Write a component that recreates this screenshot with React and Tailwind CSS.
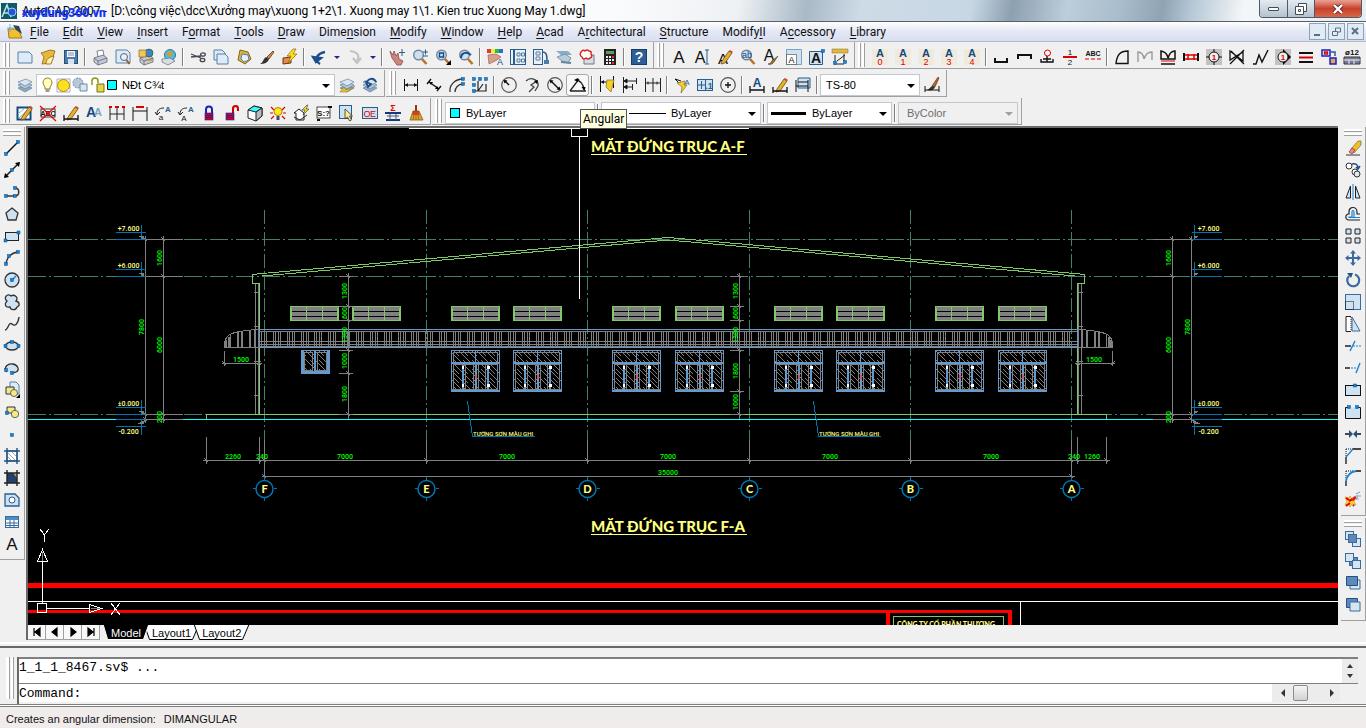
import clsx from "clsx";
import React, { useState } from "react";

const BLUE = "#2b5d8c";
const PALE = "#cfe2f1";

/* ---------- small drawing parts shared by the icons ---------- */

const Letter = ({ x = 8, y = 14, size = 16, fill = "#111", bold, children }) => (
  <text
    x={x}
    y={y}
    fontSize={size}
    fill={fill}
    textAnchor="middle"
    fontWeight={bold ? 700 : 400}
    fontFamily="Liberation Sans, sans-serif"
    stroke="none"
  >
    {children}
  </text>
);

const Sheet = ({ x = 1, y = 3, w = 14, h = 11 }) => (
  <path
    d={`M${x} ${y}h${w - 3}l3 3v${h - 3}h${-w}z`}
    fill="#dcebf6"
    stroke="#5580a8"
  />
);

const Lens = ({ children }) => (
  <g>
    <circle cx="6.5" cy="6" r="4.8" fill="#cfe0ee" stroke="#6f87a3" strokeWidth="1.4" />
    <path d="M10 10l4.5 5" stroke="#b9722d" strokeWidth="2.6" />
    {children}
  </g>
);

const Printer = () => (
  <g stroke="#667" strokeWidth="0.8">
    <path d="M5 2l6-1 1 6-6 1z" fill="#fff" />
    <path d="M2 9l9-3 4 3v4l-9 3-4-3z" fill="#c3c9d8" />
    <path d="M2 9l4 3 9-3M6 12v4" fill="none" />
  </g>
);

const Layers = () => (
  <g stroke="#5f7f9f" strokeWidth="0.7">
    <path d="M1 11l8-3 6 3-7 4z" fill="#8fa9c2" />
    <path d="M1 8l8-3 6 3-7 4z" fill="#b3c8da" />
    <path d="M1 5l8-3 6 3-7 4z" fill="#dae6f0" />
  </g>
);

const Pencil = () => (
  <g>
    <path d="M5 12l7-10 3 2-7 10-4 1z" fill="#e0b030" stroke="#7a4a10" strokeWidth="0.8" />
    <path d="M12 2l1-1 3 2-1 1z" fill="#d33" />
  </g>
);

const Broom = () => (
  <g>
    <path d="M8 0v6" stroke="#8a3b12" strokeWidth="2" />
    <path d="M5 6h6l4 9H2z" fill="#dda52a" stroke="#8a5a10" strokeWidth="0.8" />
    <path d="M5 7h6M4.500 9h7" stroke="#c22" strokeWidth="1.4" />
    <path d="M6 10l-1 5M8 10v5M10 10l1 5" stroke="#8a5a10" strokeWidth="0.7" />
  </g>
);

const Bolt = ({ fill = "#ffdf20" }) => (
  <path d="M11 0L5 7h4l-3 7 9-9h-4l3-5z" fill={fill} stroke="#8a6a00" strokeWidth="0.7" />
);

const Nodes = ({ at }) =>
  at.map(([x, y]) => (
    <rect key={`${x}-${y}`} x={x - 1.5} y={y - 1.5} width="3" height="3" fill="#1583d8" stroke="#0a4f8a" strokeWidth="0.5" />
  ));

const Lock = ({ open }) => (
  <g>
    <path
      d={open ? "M9 8V3.500a2.500 2.500 0 0 1 5 0V6" : "M5 8V4.500a3 3 0 0 1 6 0V8"}
      fill="none"
      stroke={open ? "#c00" : "#1722b8"}
      strokeWidth="2"
    />
    <rect x={open ? 2 : 4} y="8" width="8" height="7" fill="#d00" stroke="#1722b8" strokeWidth="0.6" />
    <path d={open ? "M2 10.500h8M2 12.500h8" : "M4 10.500h8M4 12.500h8"} stroke="#1722b8" />
  </g>
);

const LetterOver = ({ n }) => (
  <g>
    <rect width="16" height="16" fill="#f0eadc" />
    <Letter y={8} size={11} fill="#124a80" bold>A</Letter>
    <Letter y={16} size={9} fill="#d00">{n}</Letter>
  </g>
);

const DimBar = ({ y = 8 }) => (
  <g stroke="#111" fill="#111">
    <path d={`M1.500 ${y - 6}v12M14.500 ${y - 6}v12M2 ${y}h12`} fill="none" />
    <path d={`M2 ${y}l3-2v4zM14 ${y}l-3-2v4z`} stroke="none" />
  </g>
);

const Cube = ({ front, x, y }) => (
  <rect x={x} y={y} width="8" height="8" fill={front ? "#5d8abb" : "#d6e5f2"} stroke="#3b6a9c" />
);

const ICONS = {
  new: <Sheet />,
  open: (
    <g stroke="#8a6510" strokeWidth="0.8">
      <path d="M1 4l9-3 5 1-4 12-9 1 2-7z" fill="#e8b83d" />
      <path d="M6 15c0-5 3-7 8-8l-3 8z" fill="#fff0b5" />
    </g>
  ),
  save: (
    <g>
      <rect x="1.500" y="1.500" width="13" height="13" fill="#4b7aab" stroke="#24507c" />
      <path d="M4 2h8v6H4z" fill="#f5f8fb" />
      <path d="M5 4h6M5 6h6" stroke="#88a" />
      <path d="M5 10h6v5H5z" fill="#d8e2ec" />
    </g>
  ),
  print: <Printer />,
  preview: (
    <g>
      <Sheet y={1} h={13} />
      <circle cx="9" cy="8" r="3.500" fill="#e5f0f8" stroke="#567" />
      <path d="M11.500 11l3 4" stroke="#a05a20" strokeWidth="2" />
    </g>
  ),
  publish: (
    <g>
      <Printer />
      <circle cx="11" cy="4" r="4" fill="#3f86b8" stroke="#245" strokeWidth="0.6" />
      <path d="M1 1h7v7H1z" fill="#efc94c" stroke="#864" strokeWidth="0.7" />
      <path d="M8 11h6" stroke="#c90" strokeWidth="1.500" />
    </g>
  ),
  web: (
    <g>
      <circle cx="9" cy="6" r="5.500" fill="#58b9d6" stroke="#2679a0" />
      <path d="M6 3l4-1 2 3-3 3-3-2z" fill="#c9a13a" />
      <path d="M1 10l8-1 5 3-7 4-6-3z" fill="#d7dde8" stroke="#778" strokeWidth="0.8" />
    </g>
  ),
  cut: (
    <g fill="none" stroke="#445" strokeWidth="1.300">
      <path d="M1 5l10 4M1 8l10-1" />
      <ellipse cx="13" cy="5.500" rx="2.300" ry="1.700" />
      <ellipse cx="12.500" cy="11" rx="2.300" ry="1.700" />
    </g>
  ),
  copy: (
    <g>
      <Sheet x={1} y={1} w={11} h={10} />
      <Sheet x={4} y={5} w={11} h={10} />
    </g>
  ),
  paste: (
    <g>
      <path d="M4 1l8 2 3 7-6 5-7-4z" fill="#d9b24a" stroke="#8a6510" />
      <path d="M6 5l6 1 1 5-5 2-3-3z" fill="#e6f0f8" stroke="#5580a8" />
    </g>
  ),
  brush: (
    <g>
      <path d="M8 8l6-6 1 1-5 7z" fill="#c98a4a" stroke="#6b3b10" strokeWidth="0.8" />
      <path d="M1 15c3-1 3-5 6-7l3 2c-1 4-5 5-9 5z" fill="#333" />
    </g>
  ),
  blockEdit: (
    <g>
      <path d="M1 9l8-1v6l-8 1z" fill="#e58a4a" stroke="#703010" />
      <Bolt />
    </g>
  ),
  undo: <path d="M9 15C4 12 4 5 14 3M2 8l3 5 5-4z" fill="none" stroke="#1f4f8a" strokeWidth="2.400" />,
  redo: <path d="M3 2c8 1 10 5 7 10M6 9l4 5 4-5" fill="none" stroke="#c3c3c3" strokeWidth="2.200" />,
  pan: (
    <g>
      <path d="M1 2l3 4 1-4 2 5 2-3 1 6 4 2-2 4H8L3 9z" fill="#c9857f" stroke="#8b4f4a" strokeWidth="0.8" />
      <path d="M13 0v7M10 3.500h6" stroke={BLUE} />
    </g>
  ),
  zoomRt: <Lens><path d="M11 3h5M13.500 0.500v5M11 7h5" stroke={BLUE} /></Lens>,
  zoomWin: <Lens><path d="M4.500 4h4v4h-4z" fill="none" stroke="#124a80" strokeWidth="1.400" /><path d="M16 16v-5l-5 5z" /></Lens>,
  zoomPrev: <Lens><path d="M3 9c0-5 5-7 10-3" fill="none" stroke="#1f4f8a" strokeWidth="2" /></Lens>,
  props: (
    <g>
      <path d="M0 0h4v4H0z" fill="#e33" /><path d="M4 0h4v4H4z" fill="#ee3" /><path d="M8 0h4v4H8z" fill="#3b3" /><path d="M12 0h4v4h-4z" fill="#36d" />
      <path d="M1 6l8-1 5 3-4 3-8 4z" fill="#d8a08c" stroke="#8b4f4a" strokeWidth="0.6" />
      <Letter x={13} y={16} size={9} fill="#124a80">A</Letter>
    </g>
  ),
  center: (
    <g>
      <rect x="0.500" y="0.500" width="15" height="15" fill="#eaf2f9" stroke={BLUE} />
      <path d="M4 1v14" stroke={BLUE} strokeWidth="2" />
      <path d="M7 4h3v3H7zM11.500 4h3v3h-3zM7 10h3v3H7zM11.500 10h3v3h-3z" fill="none" stroke="#567ba0" />
    </g>
  ),
  palettes: (
    <g>
      <rect x="0.500" y="0.500" width="9" height="15" fill="#eaf2f9" stroke={BLUE} />
      <path d="M3 3h4v3H3zM3 8h4v3H3z" fill="none" stroke="#567ba0" />
      <path d="M9 3c4 0 5 2 5 8" fill="none" stroke={BLUE} strokeWidth="1.500" />
      <path d="M11 11h5v4h-5z" fill="#4b7aab" />
    </g>
  ),
  sheetset: (
    <g>
      <path d="M0 2h12l4 4H5z" fill="#86aec9" />
      <path d="M1 8l8-3 6 4-3 5-6-2z" fill="#b8ccd9" stroke="#68859a" strokeWidth="0.8" />
      <path d="M5 13l10 1" stroke="#68859a" strokeWidth="2" />
    </g>
  ),
  markup: (
    <g>
      <path d="M5 6h10v9H5z" fill="#d8dde4" stroke="#778" />
      <path d="M2 3q2-3 4-1q2-2 4 0q3 0 2 3q2 3-1 4q-2 2-4 0q-3 2-4-1q-3-2-1-5z" fill="#fff" stroke="#d22" strokeWidth="1.400" />
    </g>
  ),
  calc: (
    <g>
      <rect x="2" y="0" width="12" height="16" fill="#222" />
      <path d="M4 2h8v3H4z" fill="#5d9a5d" />
      <path d="M4 7h2v2H4zM7 7h2v2H7zM4 10h2v2H4zM7 10h2v2H7zM4 13h2v2H4zM7 13h2v2H7zM10 10h2v2h-2z" fill="#eee" />
      <path d="M10 7h2v2h-2zM10 13h2v2h-2z" fill="#d33" />
    </g>
  ),
  help: (
    <g>
      <rect x="0.500" y="0.500" width="15" height="15" fill="#2b5f96" stroke="#173d66" />
      <Letter size={14} y={13} fill="#fff" bold>?</Letter>
    </g>
  ),
  mtext: <Letter size={17}>A</Letter>,
  dtext: <g><Letter x={6} size={16}>A</Letter><path d="M11 1h4M13 1v14M11 15h4" stroke={BLUE} /></g>,
  editText: <g><Letter x={6} y={15} size={15}>A</Letter><Pencil /></g>,
  findText: <Lens><Letter x={7} y={9} size={9} fill="#124a80">ab</Letter></Lens>,
  textStyle: <g><Letter x={6} y={12}>A</Letter><path d="M5 15c3 0 3-3 5-4l5-4-4 6c-1 2-4 3-6 2z" fill="#a86a30" stroke="#442" strokeWidth="0.6" /></g>,
  textScale: <g><path d="M0.500 0.500h15v15h-15z" fill={PALE} stroke="#7f9fbf" /><path d="M0.500 5.500h10v10h-10z" fill="#fff" stroke="#222" strokeDasharray="1 1" /><Letter x={5.500} y={14} size={9}>A</Letter></g>,
  textJust: <g><path d="M0.500 2.500h13v13h-13z" fill={PALE} stroke={BLUE} /><Letter x={7} y={14} size={14} bold>A</Letter><Nodes at={[[14, 2]]} /></g>,
  textSpace: <g><path d="M0 0h16v4H0z" fill="#e3b93a" stroke="#864" strokeWidth="0.500" /><path d="M3 6v9h9M12 5v7M5 12l8-6" stroke="#222" fill="none" /><Nodes at={[[3, 14], [13, 13]]} /></g>,
  a0: <LetterOver n="0" />,
  a1: <LetterOver n="1" />,
  a2: <LetterOver n="2" />,
  a3: <LetterOver n="3" />,
  a4: <LetterOver n="4" />,
  barUp: <path d="M2 9v4h12V9" fill="none" stroke="#111" strokeWidth="2" />,
  barDown: <path d="M2 10V6h13v4" fill="none" stroke="#111" strokeWidth="2" />,
  barPin: <g><path d="M2 10v3h12v-3M8 13V7M4 10h8" fill="none" stroke="#111" strokeWidth="1.400" /><circle cx="8.500" cy="4" r="3" fill="#fff" stroke="#d00" /></g>,
  half: <g><Letter y={6} size={8}>1</Letter><path d="M1 8h14" stroke="#d00" strokeWidth="2" /><Letter y={16} size={8}>2</Letter></g>,
  abcDots: <g><Letter y={7} size={7} bold>ABC</Letter><path d="M0 10h16" stroke="#d00" strokeDasharray="4 2" /></g>,
  arcA: <path d="M2 14.500h12V2C6 2 3 6 2 14.500z" fill="none" stroke="#111" strokeWidth="1.400" />,
  mGray: <path d="M1 13V3q5 0 6 7q2-7 8-7v8" fill="none" stroke="#999" strokeWidth="1.400" />,
  mBlack: <g><path d="M1 10V2q6 1 7 7q2-7 7-7v8z" fill="none" stroke="#111" strokeWidth="1.500" /><path d="M1 12h14" stroke="#d00" /><path d="M1 15h14" stroke="#111" strokeWidth="1.500" /></g>,
  ibeam: <g><path d="M1 4v8M15 4v8" stroke="#111" strokeWidth="2" /><path d="M2 6h12M2 10h12M5 5v6M11 5v6" stroke="#d00" strokeWidth="1.500" /></g>,
  node1: <g><path d="M0 0h16v16H0z" fill="#c4c2c0" /><path d="M8 0v16M0 8h16" stroke="#111" /><circle cx="8" cy="8" r="5" fill="#eee" stroke="#111" /><Letter y={11} size={8} fill="#d00" bold>1</Letter></g>,
  scissor: <path d="M1 2v9L14 3v9zM1 15L15 1M2 2l13 13" fill="none" stroke="#111" strokeWidth="1.300" />,
  zig: <path d="M1 15h3l3-9 3 7 6-12" fill="none" stroke="#111" strokeWidth="1.400" />,
  node2: <g><path d="M0 0h16v16H0z" fill="#c4c2c0" /><path d="M8 0l8 8-8 8z" /><circle cx="8" cy="8" r="5" fill="#eee" stroke="#111" /><Letter y={11} size={8} fill="#d00" bold>1</Letter></g>,
  bars3: <g strokeWidth="2"><path d="M1 4h14M1 13h14" stroke="#111" /><path d="M1 8.500h14" stroke="#d00" /></g>,
  boxes: <g fill="#ffd" strokeWidth="1.500"><path d="M1 1h8v6H1z" stroke="#12c" /><path d="M3.500 3h3v2h-3z" stroke="#d00" /><path d="M9 9h6v6H9z" fill="#f3a24c" stroke="#12c" /><path d="M10 3h4v4" fill="none" stroke={BLUE} /></g>,
  phi: <g><Letter y={6} size={8} bold>ø12</Letter><path d="M0 8h16v7H0z" fill="#7a7f9e" stroke="#333" /><path d="M0 11h16M5 11v4M10 11v4" stroke="#eee" /></g>,
  layers: <Layers />,
  layerCur: <g><Layers /><path d="M1 15l4-5 2 3 9-4-8 6z" fill="#e8c02a" stroke="#864" strokeWidth="0.500" /></g>,
  layerPrev: <g><Layers /><path d="M5 7c0-6 7-7 9-2M4 5l2 5 3-3z" fill="none" stroke="#1f4f8a" strokeWidth="1.800" /></g>,
  dimLin: <DimBar />,
  dimAlign: <g><path d="M3 5l10 7M1 7l4-5M11 14l4-5" stroke="#111" strokeWidth="1.400" /><path d="M3 5l4 0-2 3zM13 12l-4 0 2-3z" /></g>,
  dimArc: <g><path d="M1 15C0 8 6 2 14 2M6 15c0-4 3-8 8-8" fill="none" stroke="#333" strokeWidth="1.300" /><Nodes at={[[14, 2], [14, 7]]} /></g>,
  dimOrd: <g><path d="M6 4v10h8V7M6 14l5-7M3 14h3" fill="none" stroke="#222" strokeWidth="1.200" /><Nodes at={[[2, 2], [8, 2], [14, 2], [2, 8], [2, 14]]} /></g>,
  dimRad: <g><circle cx="8" cy="8" r="7.300" fill="none" stroke="#555" strokeWidth="1.200" /><path d="M8 8L4 4" stroke="#111" strokeWidth="1.500" /><path d="M2.500 3l4 .5-3 3z" /></g>,
  dimJog: <g><path d="M2 4c5-5 13-1 12 5l-3 5M13 4L7 8l3 2-5 5" fill="none" stroke="#444" strokeWidth="1.300" /><path d="M14 3l-1 4-3-3z" /></g>,
  dimDia: <g><circle cx="8" cy="8" r="7.300" fill="none" stroke="#555" strokeWidth="1.200" /><path d="M4 4l8 8" stroke="#111" strokeWidth="1.500" /><path d="M2.500 3l4 .5-3 3zM13.500 13l-4-.5 3-3z" /></g>,
  dimAng: <g><path d="M0 14L9 2M0 14h16M6 3q7 1 8 10" fill="none" stroke="#222" strokeWidth="1.300" /><path d="M14.500 14l-3-4h4zM4 3l4-2v4z" /></g>,
  dimQuick: <g><DimBar y={5} /><path d="M8 3l7 0-3 12-5-5z" fill="#f4d21c" stroke="#864" strokeWidth="0.700" /><path d="M1.500 10v5" stroke="#111" /></g>,
  dimBase: <g stroke="#222"><path d="M1.500 0v16M2 4h12M14.500 1v6M2 10h8M10.500 7v6" fill="none" /><path d="M2 4l3-2v4zM2 10l3-2v4z" /></g>,
  dimCont: <g stroke="#222" fill="none"><path d="M0.500 1v14M8 1v14M15.500 1v14M1 6h14" /><path d="M3 4.500v3M12 4.500v3" /></g>,
  leader: <g><path d="M1 2l6 2M1 2l4 4" stroke="#111" /><path d="M3 6l8-2-1 4 3 0-6 8 1-6z" fill="#f4d21c" stroke="#864" strokeWidth="0.700" /><Letter x={13} y={8} size={8} fill={BLUE}>A</Letter></g>,
  tolerance: <g><rect x="0.500" y="2.500" width="15" height="11" fill={PALE} stroke={BLUE} /><path d="M8.500 3v10M1 8h7M4.500 4v8" stroke={BLUE} /><Letter x={12} y={12} size={9} fill={BLUE} bold>.1</Letter></g>,
  centerMark: <g><circle cx="8" cy="8" r="7.300" fill="none" stroke="#555" strokeWidth="1.200" /><path d="M8 5v6M5 8h6" stroke="#111" strokeWidth="1.300" /></g>,
  dimText: <g><Letter y={10} size={12} fill="#124a80" bold>A</Letter><path d="M1 9v7M15 9v7M1 13h14" stroke="#111" strokeWidth="1.300" /></g>,
  dimPencil: <g><Pencil /><path d="M1 10v6M15 10v6M1 14h14" stroke="#111" strokeWidth="1.300" /></g>,
  dimUpdate: <g><path d="M3 1h12v10H3z" fill={PALE} stroke={BLUE} /><path d="M1 3v12M13 3v12M1 9h12M3 5h10" stroke="#111" /></g>,
  dimBrush: <g><path d="M8 9l6-9 1 1-4 9z" fill="#b5652a" stroke="#5b2b08" strokeWidth="0.600" /><path d="M3 13c3-1 3-3 5-4l3 1c-1 3-4 4-8 3z" fill="#333" /><path d="M1 9v6M15 9v6M1 13h14" stroke="#111" /></g>,
  sketch: <g><rect x="0.500" y="2.500" width="13" height="12" fill="#fff" stroke="#124a80" strokeWidth="2" /><path d="M2 13L12 4M2 8l6-5M6 14l7-6" stroke="#8ab" /><Pencil /></g>,
  noAbc: <g><rect x="1" y="4" width="14" height="8" fill="#fff" stroke="#333" /><Letter y={11} size={7} bold>ABC</Letter><path d="M0 1l16 15M16 1L0 16" stroke="#e00" strokeWidth="1.200" /></g>,
  aa: <g><Letter x={5} y={12} size={14} fill="#124a80" bold>A</Letter><Letter x={12} y={11} size={11} fill="#7fa3c4" bold>A</Letter></g>,
  dimRed2: <g><path d="M1 3v12M8 3v12M15 3v12M1 9h14" stroke="#222" fill="none" /><path d="M0 2h3M6 2h4M13 2h3" stroke="#d00" strokeWidth="2" /></g>,
  dimRed1: <g><path d="M1 2v14M15 2v14M1 6h14" stroke="#111" /><path d="M4 2h8" stroke="#d00" strokeWidth="2" /></g>,
  swapA: <g><path d="M2 9c0-5 4-6 7-6M0 7l2 3 3-3" fill="none" stroke="#222" /><Letter x={13} y={7} size={8} fill={BLUE} bold>A</Letter><Letter x={6} y={15} size={8}>a</Letter></g>,
  swapB: <g><path d="M2 9c0-5 4-6 7-6M0 7l2 3 3-3" fill="none" stroke="#222" /><Letter x={13} y={7} size={8} fill={BLUE} bold>A</Letter><Letter x={6} y={16} size={8}>A</Letter></g>,
  lock: <Lock />,
  unlock: <Lock open />,
  cube: <g stroke="#222"><path d="M1 5l6-4 8 2v8l-6 5-8-3z" fill="#fff" /><path d="M1 5l6-4 8 2-6 4z" fill="#3ff" /><path d="M9 7v9l6-5V3z" fill="#bbb" /></g>,
  bulbRed: <g><path d="M1 2l3 3M15 2l-3 3M0 8h3M16 8h-3M1 14l3-3M15 14l-3-3" stroke="#d00" strokeWidth="1.200" /><circle cx="8" cy="6.500" r="4" fill="#ffe81c" stroke="#a80" /><path d="M6.500 11h3v4h-3z" fill="#447" /></g>,
  home: <g><path d="M1 8l5-4 5 4v7H3V8z" fill="#fff" stroke="#222" /><path d="M1 12l6 3 7-5" stroke="#222" fill="none" /><path d="M14 0L9 5h3l-2 5 6-6h-3l2-4z" fill="#f4e21c" stroke="#333" strokeWidth="0.600" /></g>,
  s17: <g><rect x="1" y="2" width="13" height="11" fill="#fff" stroke="#444" /><Letter x={7.500} y={11} size={8} bold>S:?</Letter><path d="M1 15h3M12 2h4" stroke="#111" strokeWidth="2" /></g>,
  cursor: <g><rect x="0.500" y="0.500" width="12" height="13" fill={PALE} stroke={BLUE} /><path d="M6 4v10l2.500-2 2 4 2-1-2-4h3z" fill="#ffe98a" stroke="#333" strokeWidth="0.800" /></g>,
  oe: <g><rect x="0.500" y="2.500" width="15" height="11" fill={PALE} stroke={BLUE} /><Letter x={5} y={12} size={9} fill="#d00">O</Letter><Letter x={11} y={12} size={9} fill="#d00">E</Letter></g>,
  sigma: <g><Letter y={6} size={9} fill="#d00" bold>Σ</Letter><path d="M0 8h16M1 15h14" stroke="#113a80" strokeWidth="2" /><path d="M2 11h12M5 9v6M11 9v6" stroke="#557" /></g>,
  broom: <Broom />,
  line: <g><path d="M2 14L14 2" stroke="#111" strokeWidth="1.400" /><Nodes at={[[2, 14], [14, 2]]} /></g>,
  xline: <g><path d="M1 15L15 1" stroke="#222" strokeWidth="1.600" /><path d="M0 16l1-5 4 4zM16 0l-1 5-4-4z" /><Nodes at={[[8, 8]]} /></g>,
  pline: <g><path d="M2 12h9c5 0 5-8 0-8" fill="none" stroke="#333" strokeWidth="1.500" /><Nodes at={[[2, 12], [11, 12], [11, 4]]} /></g>,
  polygon: <path d="M8 2l6 5-2 7H4L2 7z" fill={PALE} stroke="#333" strokeWidth="1.300" />,
  rect: <g><rect x="1.500" y="4.500" width="13" height="8" fill={PALE} stroke="#222" /><Nodes at={[[1.500, 12.500], [14.500, 4.5]]} /></g>,
  arc: <g><path d="M2 14C3 7 7 3 14 2" fill="none" stroke="#333" strokeWidth="1.400" /><Nodes at={[[2, 14], [5, 6], [14, 2]]} /></g>,
  circle: <g><circle cx="8" cy="8" r="7" fill={PALE} stroke="#333" strokeWidth="1.300" /><path d="M8 8l4-4" stroke="#1583d8" strokeWidth="1.500" /><Nodes at={[[8, 8]]} /></g>,
  cloud: <path d="M3 7C-1 4 3-1 7 2c3-2 8 1 5 5 4 1 4 5 1 6 -1 4-7 3-7 0-5 1-6-3-3-6z" fill={PALE} stroke="#333" strokeWidth="1.300" />,
  spline: <path d="M1 14c3 0 4-9 7-6s6 0 7-7" fill="none" stroke="#333" strokeWidth="1.400" />,
  ellipse: <g><ellipse cx="8" cy="8" rx="6.500" ry="4" fill={PALE} stroke="#333" strokeWidth="1.300" /><Nodes at={[[1.500, 8], [14.500, 8], [8, 4]]} /></g>,
  ellArc: <g><path d="M3 12C-1 7 4 3 9 4s7 6 3 8c-2 1-4 0-4 0" fill={PALE} stroke="#333" strokeWidth="1.300" /><Nodes at={[[2, 10], [8, 13]]} /></g>,
  insert: <g><Sheet x={6} y={0} w={9} h={12} /><path d="M2 5h8v7H2z" fill="#f3e88a" stroke="#333" /><circle cx="10" cy="11" r="3.500" fill="#f3e88a" stroke="#665" /><path d="M16 16v-4l-4 4z" /></g>,
  block: <g><path d="M3 3h8v6H3z" fill="#f3e88a" stroke="#333" /><circle cx="11" cy="10" r="3.700" fill="#f3e88a" stroke="#665" /><Nodes at={[[3, 9]]} /></g>,
  point: <Nodes at={[[8, 9]]} />,
  hatch: <g stroke="#24507c" fill="none"><path d="M3 3h10v10H3z" fill="#fff" /><path d="M3 8l5 5M3 4l9 9M7 3l6 6" stroke="#8ab" /><path d="M0 3h16M0 13h16M3 0v16M13 0v16" strokeWidth="1.400" /></g>,
  gradient: <g fill="none"><path d="M3 3h10v10H3z" fill="#24406a" /><path d="M9 3h4v5z" fill="#c9b040" /><path d="M0 3h16M0 13h16M3 0v16M13 0v16" stroke="#222" strokeWidth="1.400" /></g>,
  region: <g><path d="M1 2h10l4 4v8H1z" fill={PALE} stroke={BLUE} strokeWidth="1.300" /><circle cx="8" cy="8" r="3" fill="#fff" stroke={BLUE} /></g>,
  table: <g><rect x="1.500" y="2.500" width="13" height="11" fill="#fff" stroke="#3b6a9c" /><path d="M2 3h12v3H2z" fill="#4f8cc9" /><path d="M2 9h12M2 11.500h12M6 6v8M10 6v8" stroke="#3b6a9c" /></g>,
  erase: <g><path d="M1 15h14" stroke="#333" /><path d="M6 9l7-8h3v4l-7 8z" fill="#f0c020" stroke="#765" strokeWidth="0.700" /><path d="M4 12l3-4 3 2-3 4z" fill="#e88" stroke="#733" strokeWidth="0.700" /></g>,
  copyObj: <g fill="#fff" stroke="#333"><circle cx="4" cy="4" r="3" /><circle cx="10" cy="10" r="3" /><circle cx="12" cy="12" r="3" fill="#dde8f0" /><path d="M7 2c4-1 6 1 6 4M11 5l2 2 2-3" fill="none" stroke="#1f4f8a" strokeWidth="1.500" /></g>,
  mirror: <g><path d="M5.500 2v12H1zM10.500 2v12H15z" fill={PALE} stroke="#222" /><path d="M8 0v16" stroke="#1583d8" /></g>,
  offset: <g fill="none"><path d="M15 8h-3V6c0-6-8-6-8 0v2H3c-3 1-3 5 0 6h12" stroke="#222" strokeWidth="1.200" /><path d="M15 11.500H4V11h3V6c0-2 2-2 2 0v5" stroke="#1583d8" strokeWidth="1.200" /></g>,
  array: <g fill={PALE} stroke="#222"><path d="M1 1h5v5H1zM10 1h5v5h-5zM1 10h5v5H1zM10 10h5v5h-5z" /></g>,
  move: <g><path d="M8 2v12M2 8h12" stroke="#3b6a9c" strokeWidth="2" /><path d="M8 0l3 3.500H5zM8 16l3-3.500H5zM0 8l3.500-3v6zM16 8l-3.500-3v6z" fill="#3b6a9c" /></g>,
  rotate: <g><path d="M4 4a6 6 0 1 0 6-1.500" fill="none" stroke="#3b6a9c" strokeWidth="2.200" /><path d="M2 1l6 0-2 5z" fill="#24507c" /></g>,
  scale: <g><rect x="0.500" y="0.500" width="15" height="15" fill={PALE} stroke="#3b6a9c" /><rect x="0.500" y="7.500" width="8" height="8" fill="none" stroke="#111" strokeDasharray="1 1" /></g>,
  stretch: <g><path d="M7 1l8 14H7z" fill={PALE} stroke="#3b6a9c" /><path d="M6 .5H1v15h5" fill="#fff" stroke="#222" /><path d="M6 1v14" stroke="#222" strokeDasharray="1 1" /></g>,
  trim: <g><path d="M0 8h6" stroke="#111" strokeWidth="1.400" /><path d="M8 8h8" stroke="#1583d8" strokeDasharray="2 1" /><path d="M10 3L5 13" stroke="#1583d8" strokeWidth="1.400" /></g>,
  extend: <g><path d="M0 8h5" stroke="#111" strokeWidth="1.400" /><path d="M6 8h6" stroke="#1583d8" strokeDasharray="2 1" /><path d="M15 3l-4 10" stroke="#1583d8" strokeWidth="1.400" /></g>,
  breakPt: <g><rect x="0.500" y="3.500" width="15" height="10" fill={PALE} stroke="#111" /><Nodes at={[[10, 3.500]]} /></g>,
  breakObj: <g><path d="M3 3.500H.5v11h15v-11H13" fill={PALE} stroke="#111" /><Nodes at={[[4, 3], [12, 3]]} /></g>,
  join: <g><path d="M0 8h4M12 8h4" stroke="#111" strokeWidth="1.400" /><path d="M4 4l4 4-4 4zM12 4L8 8l4 4z" fill="#24507c" /></g>,
  chamfer: <g fill="none"><path d="M1 16V9M8 1h8" stroke="#111" strokeWidth="1.300" /><path d="M1 1v8M1 1h7" stroke="#111" strokeDasharray="1 1" /><path d="M1 9l7-8" stroke="#1583d8" strokeWidth="1.400" /></g>,
  fillet: <g fill="none"><path d="M1 16v-5M11 1h5" stroke="#111" strokeWidth="1.300" /><path d="M1 1v8M1 1h7" stroke="#111" strokeDasharray="1 1" /><path d="M1 11C2 5 5 2 11 1" stroke="#1583d8" strokeWidth="1.800" /></g>,
  explode: (
    <g>
      <path d="M0 5l4 1 1-2 2 3 3-1-1 4 2 3-4-1-2 3-1-3-4 1 2-4z" fill="#fd3" stroke="#e08a20" strokeWidth="0.700" />
      <path d="M1 6l3 2M1 14l4-3M4 9l4-2M8 13l1 1" stroke="#d00" strokeWidth="2" />
      <path d="M7 8l4-3" stroke="#d22" strokeWidth="3" />
      <path d="M11 2l4-2M12 4l4 0M11 7l3 0M12 3v3" stroke="#8ab" strokeWidth="1.200" />
    </g>
  ),
  front: <g><Cube x={0.5} y={0.5} /><Cube x={7.5} y={7.5} /><Cube x={3.5} y={3.5} front /></g>,
  back: <g><Cube x={4.5} y={4.5} front /><Cube x={0.5} y={0.5} /><Cube x={7.5} y={7.5} /></g>,
  above: <g><path d="M5 5h10v9H5z" fill="#d6e5f2" stroke="#3b6a9c" /><path d="M1.500 1.500h11v9h-11z" fill="#5d8abb" stroke="#24507c" /></g>,
  under: <g><path d="M1.500 1.500h11v9h-11z" fill="#5d8abb" stroke="#24507c" /><path d="M5 5h10v9H5z" fill="#d6e5f2" stroke="#3b6a9c" /></g>,
};

const MENUS = [
  ["", "F", "ile"],
  ["", "E", "dit"],
  ["", "V", "iew"],
  ["", "I", "nsert"],
  ["F", "o", "rmat"],
  ["", "T", "ools"],
  ["", "D", "raw"],
  ["Dime", "n", "sion"],
  ["", "M", "odify"],
  ["", "W", "indow"],
  ["", "H", "elp"],
  ["", "A", "cad"],
  ["A", "r", "chitectural"],
  ["", "S", "tructure"],
  ["Modify", "I", "I"],
  ["A", "c", "cessory"],
  ["", "L", "ibrary"],
];

const STANDARD = "new open save | print preview publish web | cut copy paste brush blockEdit | undo > redo > | pan zoomRt zoomWin zoomPrev | props center palettes sheetset markup calc | help".split(" ");
const TEXT = "mtext dtext editText findText textStyle textScale textJust textSpace".split(" ");
const CUSTOM = "a0 a1 a2 a3 a4 | barUp barDown barPin half abcDots | arcA mGray mBlack ibeam node1 scissor zig node2 bars3 boxes phi".split(" ");
const DIMENSION = "dimLin dimAlign dimArc dimOrd | dimRad dimJog dimDia dimAng | dimQuick dimBase dimCont | leader tolerance centerMark | dimText dimPencil dimUpdate |".split(" ");
const EXPRESS = "sketch noAbc dimPencil aa dimRed2 dimRed1 swapA swapB lock unlock cube bulbRed home s17 cursor oe sigma broom".split(" ");
const DRAW = "line xline pline polygon rect arc circle cloud spline ellipse ellArc insert block point hatch gradient region table mtext".split(" ");
const MODIFY = "erase copyObj mirror offset array move rotate scale stretch trim extend breakPt breakObj join chamfer fillet explode".split(" ");
const ORDER = "front back above under".split(" ");

function Icon({ name }) {
  return (
    <svg className="overflow-visible" width="16" height="16" viewBox="0 0 16 16" aria-hidden="true">
      {ICONS[name]}
    </svg>
  );
}

function ToolButton({ name, active, vertical }) {
  if (name === "|") {
    return <span className="mx-[2px] h-[18px] w-[2px] shrink-0 border-l border-[#808080] bg-white"></span>;
  }
  if (name === ">") {
    return (
      <button aria-label="history" className="flex h-[22px] w-[13px] items-center justify-center">
        <span className="border-x-[3px] border-t-[3px] border-x-transparent border-t-[#26268c]"></span>
      </button>
    );
  }
  return (
    <button
      aria-label={name}
      className={clsx(
        "flex h-[22px] shrink-0 items-center justify-center rounded-[3px] border hover:border-[#b0b0b0]",
        vertical ? "w-[24px]" : "w-[23px]",
        active ? "border-[#a8a8a8] bg-[#f8f8f8]" : "border-transparent"
      )}
    >
      <Icon name={name} />
    </button>
  );
}

function Toolbar({ items = [], active, last, children }) {
  return (
    <div
      className={clsx(
        "flex h-[27px] shrink-0 items-center border-b border-[#a0a0a0] pt-1 pr-[3px]",
        last ? "" : "border-r"
      )}
    >
      <div className="mb-1 ml-[3px] flex h-[24px] w-[10px] shrink-0 gap-px">
        <span className="w-[3px] border-r border-[#a0a0a0] bg-white"></span>
        <span className="w-[3px] border-r border-[#a0a0a0] bg-white"></span>
      </div>
      {items.map((name, i) => (
        <ToolButton key={i} name={name} active={active === name} />
      ))}
      {children}
    </div>
  );
}

function SideBar({ items }) {
  return (
    <div className="flex w-[25px] flex-col border-r border-b border-[#a0a0a0] pb-[4px]">
      <div className="mx-[3px] mt-[2px] mb-px flex h-[7px] flex-col gap-px">
        <span className="h-[3px] border-b border-[#a0a0a0] bg-white"></span>
        <span className="h-[3px] border-b border-[#a0a0a0] bg-white"></span>
      </div>
      {items.map((name, i) => (
        <ToolButton key={i} name={name} vertical />
      ))}
    </div>
  );
}

function Combo({ label, value, className, pad, disabled, children }) {
  return (
    <div className={clsx("relative h-[22px] shrink-0", className)}>
      <select
        aria-label={label}
        disabled={disabled}
        className={clsx(
          "block h-full w-full appearance-none border border-[#c3c7d1] font-['Liberation_Sans',sans-serif] text-[11px] leading-[20px]",
          disabled ? "bg-[#f0f0f0] text-[#6d6d6d]" : "bg-white text-black",
          pad
        )}
      >
        <option>{value}</option>
      </select>
      <div className="pointer-events-none absolute inset-y-0 left-1 flex items-center">{children}</div>
      <span
        className={clsx(
          "pointer-events-none absolute top-[10px] right-[5px] border-x-4 border-t-4 border-x-transparent",
          disabled ? "border-t-[#a0a0a0]" : "border-t-black"
        )}
      ></span>
    </div>
  );
}

function TitleBar() {
  return (
    <div className="relative flex h-[22px] items-start border-b border-[#5a5f66] bg-[linear-gradient(100deg,#f4f6f8_0%,#fafbfc_45%,#eef1f4_54%,#a9b9c6_59%,#cddbe6_63%,#c7d7e4_71%,#8da0b1_74%,#bccddb_78%,#a9bccb_82%,#8fa3b4_85%,#b4c6d4_87%,#f4f7f9_91%,#e8edf2_100%)]">
      <svg className="mt-[3px] ml-[1px] shrink-0" width="16" height="16" viewBox="0 0 16 16">
        <rect width="16" height="16" fill="#0e5a66" />
        <path d="M1 14L6 2l4 12M3 10h6" stroke="#bfe6ea" strokeWidth="1.500" fill="none" />
        <circle cx="11" cy="9" r="4" fill="#2456d0" stroke="#9cf" />
      </svg>
      <div className="ml-[5px] flex text-[12px] leading-[22px] whitespace-pre text-black">
        <span className="w-[89px]">AutoCAD 2007 -</span>
        <span>[D:\công việc\dcc\Xưởng may\xuong 1+2\1. Xuong may 1\1. Kien truc Xuong May 1.dwg]</span>
      </div>
      <span className="absolute top-[5px] left-[22px] text-[12px] leading-[16px] font-black text-[#1436f0]">
        xuydung360.vn
      </span>
      <div className="mr-1 ml-auto flex h-[18px] overflow-hidden rounded-b-[4px] border border-t-0 border-[#4d5a68]">
        <button aria-label="Minimize" className="flex w-[28px] items-center justify-center border-r border-[#4d5a68] bg-linear-to-b from-[#e4ebf1] to-[#b4c2cf]">
          <span className="h-[4px] w-[11px] rounded-[1px] border border-[#444b55] bg-white"></span>
        </button>
        <button aria-label="Restore" className="flex w-[27px] items-center justify-center border-r border-[#4d5a68] bg-linear-to-b from-[#e4ebf1] to-[#b4c2cf]">
          <svg width="12" height="12" viewBox="0 0 12 12" fill="#fff" stroke="#444b55">
            <path d="M3.500 .5h8v8h-8z" />
            <path d="M.5 3.500h8v8h-8z" />
            <path d="M3.500 6.500h2v2h-2z" />
          </svg>
        </button>
        <button aria-label="Close" className="flex w-[46px] items-center justify-center bg-linear-to-b from-[#e8a193] via-[#c8402a] to-[#d8664a]">
          <svg width="12" height="10" viewBox="0 0 12 10">
            <path d="M2 1l8 8M10 1L2 9" stroke="#5b2a2a" strokeWidth="4" />
            <path d="M2 1l8 8M10 1L2 9" stroke="#fff" strokeWidth="2.400" />
          </svg>
        </button>
      </div>
    </div>
  );
}

function MenuBar() {
  return (
    <div className="flex h-[20px] items-center border-b border-[#b5b9c4] bg-linear-to-b from-white via-[#e4e8f5] to-[#dadff0]">
      <svg className="ml-[7px] shrink-0" width="16" height="16" viewBox="0 0 16 16">
        <path d="M1 5h10l4 9H2z" fill="#f0c030" stroke="#a87a10" />
        <path d="M6 1l6 1 3 8-6-4z" fill="#345" />
        <path d="M3 0v8M0 4h7" stroke="#6ab0e0" />
      </svg>
      <div className="flex">
        {MENUS.map(([pre, key, post]) => (
          <button key={pre + key + post} className="px-[7px] text-[12px] leading-[18px] text-[#111] hover:bg-[#c5d3ee]">
            {pre}
            <u className="underline-offset-2">{key}</u>
            {post}
          </button>
        ))}
      </div>
      <div className="mr-[2px] ml-auto flex gap-[2px] text-[#5d6f83]">
        {["M4 11h6", "M3.500 7.500h5v4h-5zM6.500 7v-3h5v4h-3", "M4 4l6 6M10 4l-6 6"].map((d, i) => (
          <button key={i} aria-label={["Minimize drawing", "Restore drawing", "Close drawing"][i]} className="flex h-[17px] w-[17px] items-center justify-center border border-[#8ea3bb] bg-[#e1ebf6]">
            <svg width="15" height="15" viewBox="0 0 15 15" fill="none" stroke="currentColor" strokeWidth={i === 1 ? 1 : 2}>
              <path d={d} />
            </svg>
          </button>
        ))}
      </div>
    </div>
  );
}

/* ---------- drawing ---------- */

const AXES = [
  ["F", 264.5],
  ["E", 426.5],
  ["D", 587.5],
  ["C", 749.5],
  ["B", 910.5],
  ["A", 1071.5],
];
const BAYS = [290, 352, 451, 513, 612, 675, 774, 836, 935, 998];
const range = (n) => [...Array(n).keys()];

const DimText = ({ x, y, up, children }) => (
  <text
    x={x}
    y={y}
    fontSize="7"
    fontWeight="500"
    fill="#00ff00"
    textAnchor="middle"
    transform={up ? `rotate(-90 ${x} ${y})` : undefined}
  >
    {children}
  </text>
);

const Tick = ({ x, y }) => <path d={`M${x - 3} ${y}h6M${x} ${y - 3}v6M${x - 2} ${y - 2}l4 4`} stroke="#808080" />;

function Louver({ x }) {
  return (
    <g>
      <rect x={x + 0.5} y="306.5" width="48" height="14" fill="#808080" stroke="#80c868" />
      <path d={`M${x + 1} 311.5h47M${x + 1} 316.5h47`} stroke="#000" />
      <path d={`M${x + 16.5} 307v13M${x + 32.5} 307v13M${x + 1} 308v12M${x + 48} 308v12`} stroke="#80c868" strokeWidth="1.500" />
    </g>
  );
}

function Casement({ x }) {
  return (
    <g>
      <rect x={x + 0.5} y="350.5" width="48" height="41" fill="url(#glass)" stroke="#6699cc" />
      <rect x={x + 2.5} y="352.5" width="44" height="37" fill="none" stroke="#808080" />
      <path d={`M${x} 362.500h49M${x} 390.500h49M${x + 12} 363v27M${x + 25} 363v27M${x + 37} 363v27`} stroke="#6699cc" strokeWidth="2" />
      <path d={`M${x + 24.5} 351v12`} stroke="#6699cc" />
      <path d={`M${x + 3} 364.500h43M${x + 14.5} 365v24M${x + 22.5} 365v24M${x + 34.5} 365v24M${x + 27.5} 365v24`} stroke="#808080" />
      <path d={`M${x + 11} 367.500h2M${x + 36} 367.500h3M${x + 11} 385h2M${x + 36} 385h3`} stroke="#fff" strokeWidth="3" />
      <path d={`M${x + 25} 375v4`} stroke="#e05050" strokeWidth="2" />
    </g>
  );
}

// right = 1 mirrors the marker to the east side of the building
function Level({ x, y, text, right, below }) {
  const dir = right ? 1 : -1;
  const stem = x + dir * (right ? 3 : 4);
  const line = below ? y + 7 : y - 7;
  return (
    <g>
      <path d={`M${x} ${line}h${dir * 30}M${x} ${y}h${dir * 30}M${stem} ${below ? y : y - 15}v15`} stroke="#0074ac" />
      <path d={below ? `M${x} ${y}l${dir * 8} 4h${-dir * 6}z` : `M${x + dir * 2} ${y}l${dir * 6} -4h${-dir * 6}z`} fill="#808080" />
      <text x={x + dir * 17} y={below ? y + 14 : y - 9} textAnchor="middle" fontSize="7" fontWeight="500" fill="#ffff80">
        {text}
      </text>
    </g>
  );
}

function Wing({ flip }) {
  return (
    <g transform={flip ? "translate(1337 0) scale(-1 1)" : undefined} stroke="#808080" fill="none">
      <path d="M224.500 347.500v-5q2-8 9-9.500q10-3 26-3.500M224 347.500h36" />
      <path d="M226 340v8M228.500 337v10" strokeWidth="2" />
      <path d="M230.500 335v12M237.500 332v15M238.500 332v15M241.500 331v16M242.500 331v16M249.500 330v17M250.500 330v17M254.500 330v17M222 363.500h40M224.500 351v15" />
      <path d="M255.500 283v131M258.500 283v131M254 292h6M254 326h6M254 361h6M254 395h6" />
      <path d="M259.500 283v131" stroke="#80c868" />
      <path d="M262 273.500l-9.500 1v8.500h7" stroke="#80c868" />
      <path d="M222 361l4 4M257 361l4 4M257 365l4-4" />
    </g>
  );
}

function VerticalDims({ x, marks, texts }) {
  return (
    <g>
      <path d={`M${x} 273v146`} stroke="#808080" />
      {marks.map((y) => (
        <path key={y} d={`M${x - 10} ${y}h14M${x - 2} ${y - 2}l4 4`} stroke="#808080" />
      ))}
      {texts.map(([y, t]) => (
        <DimText key={y} x={x - 2} y={y} up>
          {t}
        </DimText>
      ))}
    </g>
  );
}

function Elevation() {
  return (
    <svg
      className="block h-full w-full bg-black font-['Roboto',sans-serif]"
      shapeRendering="crispEdges"
      fill="none"
    >
      <defs>
        <pattern id="glass" width="9" height="9" patternUnits="userSpaceOnUse">
          <path d="M-1 -1l11 11M3 -1l7 7M-1 8l2 2" stroke="#808080" />
        </pattern>
      </defs>
      <g transform="translate(-28 -128)">
        <path d="M409 128.500h340" stroke="#fff" />
        {[239.5, 276.5, 414.5].map((y) => (
          <path key={y} d={`M28 ${y}h3000`} stroke="#3f7f6b" strokeDasharray="18 3 2 3" />
        ))}
        {AXES.map(([name, x]) => (
          <path key={name} d={`M${x} 210v230`} stroke="#3f7f6b" strokeDasharray="14 3 2 3" />
        ))}
        <path d="M28 419.500h3000" stroke="#0ff" />

        {/* outer height dimensions */}
        <g stroke="#808080">
          <path d="M145.500 236v186M163.500 236v186M1172.500 236v186M1191.500 236v186" />
          <path d="M146 239.500h37M146 276.500h37M146 414.500h37M146 419.500h37M1153 239.500h38M1153 276.500h20M1153 414.500h38M1153 419.500h38" />
        </g>
        {[145.5, 163.5, 1172.5, 1191.5].map((x) =>
          [239.5, 414.5, 419.5].map((y) => <Tick key={`${x}${y}`} x={x} y={y} />)
        )}
        <Tick x={163.5} y={276.5} />
        <Tick x={1172.5} y={276.5} />
        {[162, 1171].map((x) => (
          <g key={x}>
            <DimText x={x} y={258} up>1600</DimText>
            <DimText x={x} y={345} up>6000</DimText>
            <DimText x={x} y={417} up>200</DimText>
          </g>
        ))}
        <DimText x={144} y={327} up>7800</DimText>
        <DimText x={1190} y={327} up>7800</DimText>
        {[0, 1].map((right) => {
          const x = right ? 1191.5 : 145.5;
          return (
            <g key={right}>
              <Level x={x} y={239.5} text="+7.600" right={right} />
              <Level x={x} y={276.5} text="+6.000" right={right} />
              <Level x={x} y={414.5} text="±0.000" right={right} />
              <Level x={x} y={419.5} text="-0.200" right={right} below />
            </g>
          );
        })}

        {/* roof */}
        <path d="M262 273.500L668 237.500L1075 273.500M262 276L668 240L1075 276" stroke="#80c868" />
        <path d="M206.500 419v-4.500h900v4.500" stroke="#80c868" />
        <Wing />
        <Wing flip />

        {/* canopy */}
        <path d="M260 331.500h818M260 341.500h818M260 344.500h818M260 346.500h818" stroke="#808080" />
        {range(59).map((k) => {
          const x = Math.round(259 + k * 13.85) + 0.5;
          return <path key={k} d={`M${x} 331v15M${x + 2} 331v15M${x + 5} 331v15M${x + 7} 331v15`} stroke="#808080" />;
        })}
        <path d="M259.500 347.500v-18h818v18z" stroke="#6699cc" />

        {BAYS.map((x) => (
          <Louver key={x} x={x} />
        ))}
        {BAYS.slice(2).map((x) => (
          <Casement key={x} x={x} />
        ))}
        <rect x="301.500" y="350.500" width="28" height="23" fill="url(#glass)" stroke="#6699cc" />
        <path d="M303 351v22M315 351v22M328 351v22M301 371.500h29" stroke="#6699cc" strokeWidth="2" />
        <path d="M304.500 352.500h8v18h-8zM317.500 352.500h9v18h-9z" stroke="#808080" />

        <VerticalDims
          x={348.5}
          marks={[276.5, 306.5, 320.5, 350.5, 373.5, 414.5]}
          texts={[[291, "1300"], [313, "600"], [335, "1300"], [361, "1000"], [394, "1800"]]}
        />
        <VerticalDims
          x={739.5}
          marks={[276.5, 306.5, 320.5, 350.5, 391.5, 414.5]}
          texts={[[291, "1300"], [313, "600"], [335, "1300"], [371, "1800"], [402, "1000"]]}
        />
        <DimText x={241} y={362}>1500</DimText>
        <DimText x={1094} y={362}>1500</DimText>

        {/* plan dimensions */}
        <path d="M203 460.500h907M264 476.500h808" stroke="#808080" />
        {[206.5, 259.5, 1077.5, 1106.5].map((x) => (
          <path key={x} d={`M${x} 437v26`} stroke="#808080" />
        ))}
        {[206.5, 259.5, ...AXES.map((a) => a[1]), 1077.5, 1106.5].map((x) => (
          <Tick key={x} x={x} y={460.5} />
        ))}
        <path d="M264.500 440v40M1071.500 440v40M426.500 440v24M587.500 440v24M749.500 440v24M910.500 440v24" stroke="#808080" />
        <Tick x={264.5} y={476.5} />
        <Tick x={1071.5} y={476.5} />
        <DimText x={233} y={459}>2260</DimText>
        <DimText x={262} y={459}>240</DimText>
        {[345, 507, 668, 830, 991].map((x) => (
          <DimText key={x} x={x} y={459}>7000</DimText>
        ))}
        <DimText x={1074} y={459}>240</DimText>
        <DimText x={1092} y={459}>1260</DimText>
        <DimText x={668} y={475}>35000</DimText>

        {AXES.map(([name, x]) => (
          <g key={name}>
            <circle cx={x} cy="489" r="8.500" stroke="#0074ac" strokeWidth="1.500" shapeRendering="auto" />
            <path d={`M${x} 477v3M${x} 498v3M${x - 12} 488.500h3M${x + 9} 488.500h3`} stroke="#0074ac" />
            <text x={x} y="493" textAnchor="middle" fontSize="11" fontWeight="900" fill="#ffff80" className="font-['Lato',sans-serif]">
              {name}
            </text>
          </g>
        ))}

        {[467, 813].map((x) => (
          <g key={x}>
            <path d={`M${x + 0.5} 401l5 35.500h62`} stroke="#0074ac" />
            <text x={x + 6} y="436" fontSize="6" fontWeight="500" fill="#ffff80">
              TƯỜNG SƠN MÀU GHI
            </text>
          </g>
        ))}

        <g fill="#ffff80" fontSize="15" fontWeight="900" className="font-['Lato',sans-serif]">
          <text x="591" y="152">MẶT ĐỨNG TRỤC A-F</text>
          <text x="591" y="532">MẶT ĐỨNG TRỤC F-A</text>
        </g>
        <path d="M591 154.500h156M591 534.500h156" stroke="#ffff80" />

        {/* sheet border */}
        <path d="M28 585.500h3000" stroke="#f00" strokeWidth="5" />
        <path d="M28 601.500h3000M1020.500 602v300" stroke="#fff" />
        <path d="M28 611.500h984" stroke="#f00" strokeWidth="3" />
        <path d="M888 611v300M1010 611v300" stroke="#f00" strokeWidth="4" />
        <rect x="893.500" y="616.500" width="110" height="300" stroke="#80c868" />
        <text x="897" y="627" fontSize="7" fontWeight="900" fill="#ffff80" className="font-['Lato',sans-serif]">
          CÔNG TY CỔ PHẦN THƯƠNG
        </text>

        {/* UCS */}
        <g stroke="#fff">
          <path d="M37.500 603.500h9v9h-9zM42.500 603v-41M47 608.500h42" />
          <path d="M37.500 561.500h10l-5-12zM89.500 604.500v8l12-4z" />
          <path d="M42.500 552v9M91 608.500h9" stroke="#808080" />
          <path d="M40 529l4.500 6v7M49 529l-4.500 6M111 603l9 12M120 603l-9 12" />
        </g>

        {/* crosshair */}
        <path d="M579.500 137v162M571.500 128v8.500h16v-8.500" stroke="#fff" />
      </g>
    </svg>
  );
}

function LayoutTabs() {
  const [tab, setTab] = useState("Model");
  const arrows = ["M5 3v8M11 3v8L6 7z", "M10 3v8L5 7z", "M6 3v8l5-4z", "M11 3v8M5 3v8l5-4z"];
  return (
    <div className="flex h-[15px] shrink-0 bg-[#f0f0f0]">
      {arrows.map((d, i) => (
        <button key={d} aria-label={["First", "Previous", "Next", "Last"][i]} className="flex w-[18px] items-center justify-center border-r border-b border-[#a0a0a0] bg-[#f8f8f8]">
          <svg width="16" height="14" viewBox="0 0 16 14" fill="#000" stroke="#000">
            <path d={d} strokeWidth="1.200" />
          </svg>
        </button>
      ))}
      <div className="ml-[3px] flex">
        {["Model", "Layout1", "Layout2"].map((name) => (
          <button
            key={name}
            onClick={() => setTab(name)}
            className={clsx(
              "relative -mr-[5px] h-[15px] px-2 font-['Liberation_Sans',sans-serif] text-[11px] leading-[14px]",
              tab === name ? "z-10 text-white" : "text-black"
            )}
          >
            <svg className="absolute inset-0 h-full w-full" viewBox="0 0 50 15" preserveAspectRatio="none">
              <path
                d="M0 -1L5 14.500H44L50 -1z"
                fill={tab === name ? "#000" : "#fff"}
                stroke={tab === name ? "#fff" : "#000"}
                vectorEffect="non-scaling-stroke"
              />
            </svg>
            <span className="relative">{name}</span>
          </button>
        ))}
      </div>
    </div>
  );
}

function CommandLine() {
  const [command, setCommand] = useState("");
  return (
    <div className="flex h-[56px] shrink-0 pt-[9px] pl-[6px] font-['Liberation_Mono',monospace] text-[13px]">
      <div className="flex h-[42px] w-[11px] gap-px">
        <span className="w-[4px] border-r border-[#a0a0a0] bg-white"></span>
        <span className="w-[3px] border-r border-[#a0a0a0] bg-white"></span>
      </div>
      <div className="mr-2 flex flex-1 flex-col border-l-2 border-[#696969]">
        <div className="flex h-[27px] border-t-2 border-b border-[#808080] bg-white">
          <div className="flex-1 leading-[18px]">1_1_1_8467.sv$ ...</div>
          <div className="flex w-[16px] flex-col items-center justify-between bg-[#ececec] py-[5px]">
            <button aria-label="Scroll up" className="border-x-[3px] border-b-4 border-x-transparent border-b-[#333]"></button>
            <button aria-label="Scroll down" className="border-x-[3px] border-t-4 border-x-transparent border-t-[#333]"></button>
          </div>
        </div>
        <div className="flex h-[18px]">
          <label className="bg-white leading-[20px]" htmlFor="command">Command:</label>
          <input
            id="command"
            className="min-w-0 flex-1 bg-white px-1 outline-none"
            value={command}
            onChange={(e) => setCommand(e.target.value)}
          />
          <div className="mr-[18px] flex w-[68px] items-center justify-between bg-[#ececec] pr-[6px] pl-[9px]">
            <button aria-label="Scroll left" className="border-y-4 border-r-4 border-y-transparent border-r-[#333]"></button>
            <span className="mr-[14px] h-[16px] w-[15px] rounded-[2px] border border-[#8c8c8c] bg-linear-to-b from-[#f5f5f5] to-[#d2d2d2]"></span>
            <button aria-label="Scroll right" className="border-y-4 border-l-4 border-y-transparent border-l-[#333]"></button>
          </div>
        </div>
      </div>
    </div>
  );
}

export default function App() {
  return (
    <div className="flex h-screen flex-col overflow-hidden bg-[#f0f0f0] font-['Roboto',sans-serif]">
      <TitleBar />
      <MenuBar />
      <div className="mb-px flex">
        <Toolbar items={STANDARD} />
        <Toolbar items={TEXT} />
        <div className="flex-1"><Toolbar items={CUSTOM} last /></div>
      </div>
      <div className="mb-px flex gap-px">
        <Toolbar items={["layers"]}>
          <Combo label="Layer" value="NÐt C¾t" className="w-[299px]" pad="pl-[85px]">
            <svg className="ml-px" width="76" height="16" viewBox="0 0 76 16">
              <path d="M4 10C0 5 3 1 6.500 1s6.500 4 2.500 9v2H4z" fill="#ffffc0" stroke="#997a10" />
              <path d="M4.500 12h4v3h-4z" fill="#99a" />
              <path d="M16 2h13v13H16z" fill="none" stroke="#aac" />
              <circle cx="22.500" cy="8.500" r="6" fill="#ffe020" stroke="#a89010" />
              <circle cx="37" cy="6" r="5" fill="#b8c8d8" stroke="#6c88a8" strokeDasharray="2 1" />
              <path d="M39 7h7v7h-7z" fill="#dbe6ef" stroke="#6c88a8" />
              <path d="M51 8V4c0-4 6-4 6 0v2" fill="none" stroke="#8a9a10" strokeWidth="1.500" />
              <path d="M56 7h7v8h-7z" fill="#dfd84a" stroke="#77701a" />
              <path d="M66.500 3.500h9v9h-9z" fill="#0ff" stroke="#000" />
            </svg>
          </Combo>
          <ToolButton name="layerCur" />
          <ToolButton name="layerPrev" />
        </Toolbar>
        <Toolbar items={DIMENSION} active="dimAng">
          <Combo label="Dimension style" value="TS-80" className="w-[100px]" pad="pl-[5px]" />
          <ToolButton name="dimBrush" />
        </Toolbar>
      </div>
      <div className="mb-px flex gap-px">
        <Toolbar items={EXPRESS} />
        <Toolbar>
          <div className="relative">
            <Combo label="Color" value="ByLayer" className="w-[150px]" pad="pl-[20px]">
              <span className="ml-px h-[10px] w-[10px] border border-black bg-[#00ffff]"></span>
            </Combo>
            <div role="tooltip" className="absolute top-[7px] left-[135px] z-20 border border-[#555] bg-[#ffffe1] px-[2px] text-[12px] leading-[18px] text-black">
              Angular
            </div>
          </div>
          <ToolButton name="|" />
          <Combo label="Linetype" value="ByLayer" className="w-[160px]" pad="pl-[69px]">
            <span className="ml-[24px] h-px w-[37px] bg-black"></span>
          </Combo>
          <ToolButton name="|" />
          <Combo label="Lineweight" value="ByLayer" className="w-[125px]" pad="pl-[44px]">
            <span className="h-[3px] w-[35px] bg-black"></span>
          </Combo>
          <ToolButton name="|" />
          <Combo label="Plot style" value="ByColor" className="w-[120px]" pad="pl-[8px]" disabled />
        </Toolbar>
      </div>
      <div className="flex min-h-0 flex-1">
        <div className="pt-px"><SideBar items={DRAW} /></div>
        <div className="mr-[3px] ml-px flex min-w-0 flex-1 flex-col border-t-2 border-l-2 border-[#696969]">
          <div className="min-h-0 flex-1 overflow-hidden">
            <Elevation />
          </div>
          <LayoutTabs />
        </div>
        <div className="flex flex-col gap-[2px] pt-px">
          <SideBar items={MODIFY} />
          <SideBar items={ORDER} />
        </div>
      </div>
      <div className="mt-[2px] h-[6px] shrink-0 border-t-2 border-b-2 border-t-white border-b-[#696969]"></div>
      <CommandLine />
      <div className="h-[3px] shrink-0 border-y border-[#808080] bg-white"></div>
      <div className="flex h-[21px] shrink-0 items-center gap-2 bg-[#f0ecec] pt-1 pl-[6px] font-['Liberation_Sans',sans-serif] text-[11px] text-[#111]">
        <span>Creates an angular dimension:</span>
        <span>DIMANGULAR</span>
      </div>
    </div>
  );
}
